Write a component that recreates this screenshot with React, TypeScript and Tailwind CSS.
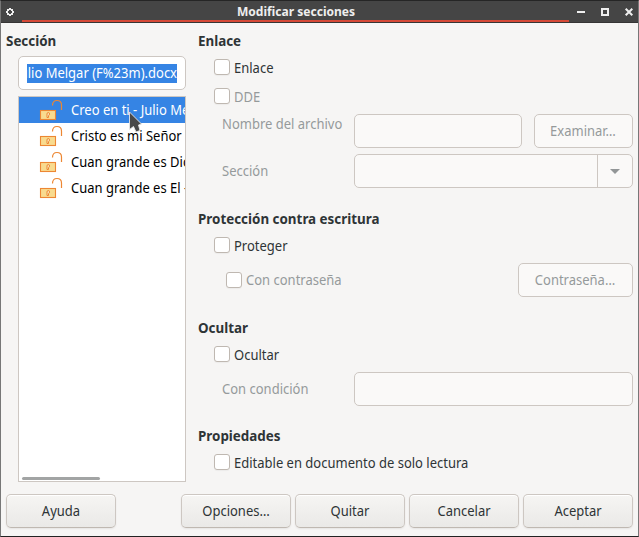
import type { ReactNode } from "react";

function Label({ children, className = "" }: { children: ReactNode; className?: string }) {
  return (
    <span className={`inline-block origin-center scale-y-[1.07] text-[13px] leading-5 whitespace-nowrap ${className}`}>
      {children}
    </span>
  );
}

function Heading({ children, className = "" }: { children: ReactNode; className?: string }) {
  return <h2 className={`h-5 text-[13.4px] leading-5 font-bold whitespace-nowrap ${className}`}>{children}</h2>;
}

function Check({ label, disabled = false, className = "", labelClass = "mt-0.5" }: { label: string; disabled?: boolean; className?: string; labelClass?: string }) {
  return (
    <label className={`flex h-5 items-center gap-1 whitespace-nowrap ${disabled ? "text-[#959a9b]" : ""} ${className}`}>
      <span className="size-4 shrink-0 rounded-[3px] border border-[#bfb8b1] bg-white shadow-[0_1px_1px_rgba(0,0,0,0.04)]" />
      <Label className={labelClass}>{label}</Label>
    </label>
  );
}

function Field({ className = "" }: { className?: string }) {
  return <div className={`h-[34px] rounded-[5px] border border-[#cdc7c2] bg-[#faf9f8] ${className}`} />;
}

function DisabledButton({ children, className = "" }: { children: ReactNode; className?: string }) {
  return (
    <button className={`flex h-[34px] items-center justify-center rounded-[5px] border border-[#cdc7c2] bg-[#faf9f8] pr-px text-[#959a9b] ${className}`}>
      <Label>{children}</Label>
    </button>
  );
}

function ActionButton({ children }: { children: ReactNode }) {
  return (
    <button className="flex h-[34px] w-[110px] items-center justify-center rounded-[5px] border border-[#cdc7c2] border-b-[#bfb8b1] bg-linear-to-b from-[#f6f5f3] to-[#eae9e7] shadow-[inset_0_1px_0_white,0_1px_2px_rgba(0,0,0,0.07)]">
      <Label>{children}</Label>
    </button>
  );
}

function LockIcon() {
  return (
    <svg className="h-6 w-6 shrink-0" viewBox="0 0 24 24" fill="none" stroke="#ed8733">
      <path d="M13.5 7.5C13.5 4.3 15.3 2.5 18 2.5S22.5 4.3 22.5 7V12" strokeWidth="1.2" />
      <rect x="1.5" y="12.5" width="15" height="9" fill="#f8db8f" strokeWidth="1.1" />
      <path d="M8 19.5v-3.5q0-1.5 1.3-1.5t1.2 1.5q0 1-1 1.7v1.8z" fill="#fbe9bd" strokeWidth="1" />
    </svg>
  );
}

const sections = [
  "Creo en ti - Julio Melgar",
  "Cristo es mi Señor",
  "Cuan grande es Dios",
  "Cuan grande es El - Himno",
];

export default function App() {
  return (
    <main className="relative flex h-[537px] w-[639px] flex-col overflow-hidden border border-t-[#252525] border-r-[#777] border-b-[#222] border-l-[#777] bg-[#f6f5f4] font-['Noto_Sans',sans-serif] text-[13px] text-[#2e3436]">
      <header className="flex h-[22px] shrink-0 border-b border-[#353535] bg-[#454545]">
        <div className="flex w-[21px] items-center pt-px pl-[5px]">
          <svg width="8" height="8" viewBox="0 0 8 8" fill="#eee" shapeRendering="crispEdges">
            <path fillRule="evenodd" d="M1 1h2V0h2v1h2v2h1v2H7v2H5v1H3V7H1V5H0V3h1zM3 2v1H2v2h1v1h2V5h1V3H5V2z" />
          </svg>
        </div>
        <h1 className="w-[547px] border-b-2 border-[#d64937] pl-px text-center text-[12.05px] leading-[21px] font-bold text-[#eee]">Modificar secciones</h1>
        <div className="flex items-center pt-px pl-2">
          <svg width="56" height="8" viewBox="0 0 56 8" fill="none" stroke="#eee" strokeWidth="2" shapeRendering="crispEdges">
            <path d="M0 4h8M25 1h6v6h-6z" />
            <path d="M48.7 .7l6.6 6.6M55.3 .7l-6.6 6.6" shapeRendering="auto" />
          </svg>
        </div>
      </header>

      <div className="flex h-[459px] shrink-0 pt-2 pl-[5px]">
        <section className="flex w-[180px] flex-col">
          <Heading>Sección</Heading>
          <div className="mt-[5px] ml-3 flex h-[34px] w-[168px] shrink-0 items-center rounded-[5px] border border-[#cdc7c2] bg-white px-2">
            <div className="flex h-[19px] w-[150px] items-center justify-end overflow-hidden bg-[#3584e4] text-white">
              <Label>Creo en ti - Julio Melgar (F%23m).docx</Label>
            </div>
          </div>
          <div className="mt-1.5 ml-3 flex h-[386px] w-[168px] flex-col overflow-hidden border border-[#cdc7c2] bg-white text-black">
            {sections.map((name, i) => (
              <div key={name} className={`flex h-[26px] shrink-0 items-center pl-5 ${i === 0 ? "bg-[#3584e4] text-white" : ""}`}>
                <LockIcon />
                <Label className="ml-2">{name}</Label>
              </div>
            ))}
            <div className="mt-auto mb-[1px] ml-[3px] h-[3px] w-[78px] rounded-full bg-[#a2a4a4]" />
          </div>
        </section>

        <section className="ml-3 flex w-[435px] flex-col">
          <Heading>Enlace</Heading>
          <Check label="Enlace" className="mt-1.5 ml-4" />
          <Check label="DDE" disabled className="mt-[9px] ml-4" />
          <div className="mt-2 flex">
            <div className="ml-6 h-5 w-[132px] text-[#959a9b]"><Label>Nombre del archivo</Label></div>
            <Field className="w-[168px]" />
            <DisabledButton className="ml-3 w-[99px]">Examinar…</DisabledButton>
          </div>
          <div className="mt-1.5 flex items-center">
            <div className="ml-6 h-5 w-[132px] text-[#959a9b]"><Label>Sección</Label></div>
            <div className="flex h-[34px] w-[279px] justify-end rounded-[5px] border border-[#cdc7c2] bg-[#faf9f8]">
              <div className="flex w-[35px] items-center justify-center border-l border-[#cdc7c2]">
                <svg width="10" height="5" viewBox="0 0 10 5"><path d="M0 0h10L5 5z" fill="#929697" /></svg>
              </div>
            </div>
          </div>

          <Heading className="mt-[21px]">Protección contra escritura</Heading>
          <Check label="Proteger" className="mt-1.5 ml-4" />
          <div className="mt-2 flex items-center justify-between">
            <Check label="Con contraseña" disabled className="ml-7" labelClass="mt-0" />
            <DisabledButton className="w-[115px]">Contraseña…</DisabledButton>
          </div>

          <Heading className="mt-[21px]">Ocultar</Heading>
          <Check label="Ocultar" className="mt-1.5 ml-4" />
          <div className="mt-2 flex items-center">
            <div className="ml-6 h-5 w-[132px] text-[#959a9b]"><Label>Con condición</Label></div>
            <Field className="w-[279px]" />
          </div>

          <Heading className="mt-5">Propiedades</Heading>
          <Check label="Editable en documento de solo lectura" className="mt-1.5 ml-4" />
        </section>
      </div>

      <footer className="mt-3 flex gap-1 px-[5px]">
        <ActionButton>Ayuda</ActionButton>
        <div className="flex-1" />
        <ActionButton>Opciones…</ActionButton>
        <ActionButton>Quitar</ActionButton>
        <ActionButton>Cancelar</ActionButton>
        <ActionButton>Aceptar</ActionButton>
      </footer>

      <svg className="absolute top-[110px] left-[127px]" width="16" height="23" viewBox="0 0 16 23">
        <path d="M1.5 1v17.5l4-3 2.5 5.5 4-1.5-1.5-5.5 3-1z" fill="#484848" stroke="#e8e8e8" strokeWidth="0.9" />
      </svg>
    </main>
  );
}
